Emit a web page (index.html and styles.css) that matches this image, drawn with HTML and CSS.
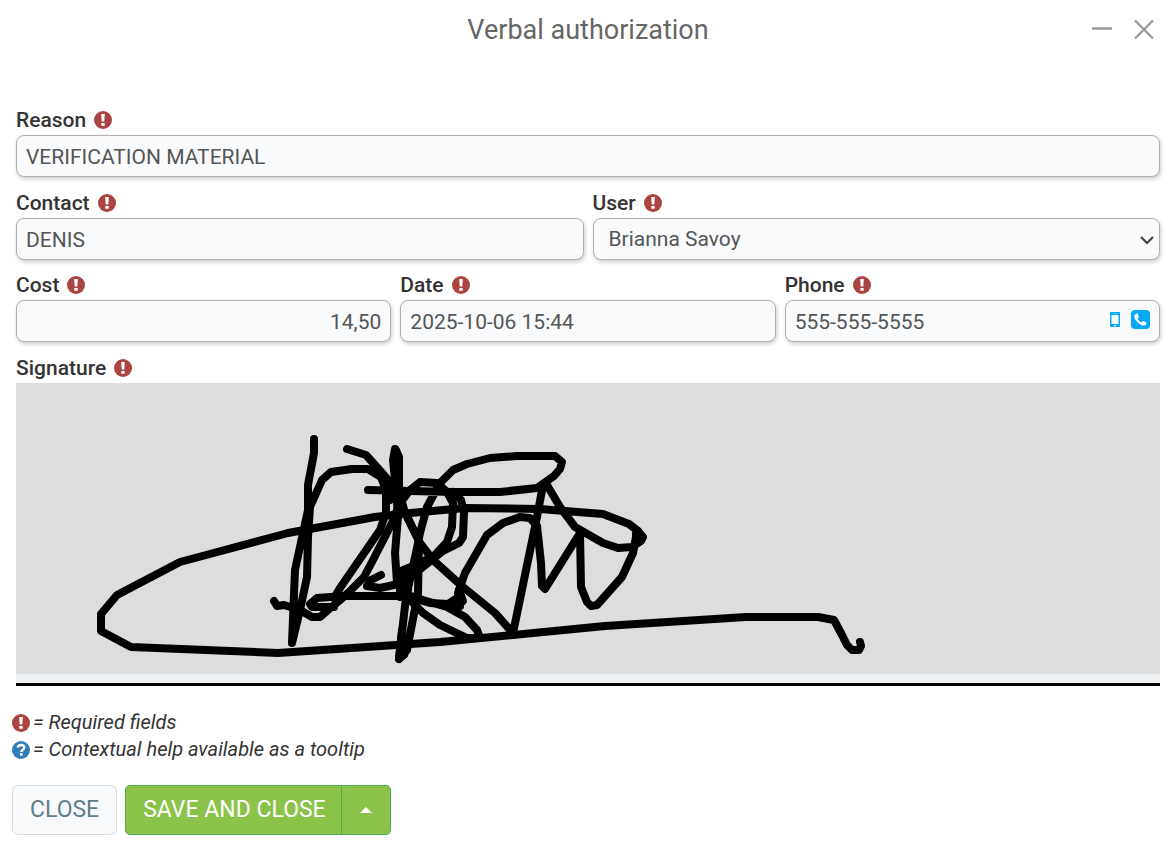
FILE: index.html
```html
<!DOCTYPE html>
<html lang="en">
<head>
<meta charset="utf-8">
<meta name="viewport" content="width=device-width, initial-scale=1">
<title>Verbal authorization</title>
<link rel="stylesheet" href="styles.css">
</head>
<body>
<svg class="defs" aria-hidden="true">
  <symbol id="required" viewBox="0 0 18 18"><circle cx="9" cy="9" r="9" fill="#a94442"/><path d="M7.2 3h3.6l-.5 7.4H7.7zM7.3 12h3.4v2.8H7.3z" fill="#fff"/></symbol>
  <symbol id="help" viewBox="0 0 18 18"><circle cx="9" cy="9" r="9" fill="#337ab7"/><path d="M5.8 6.7C6 4.8 7.2 4 9 4c2 0 3.300 1 3.300 2.600C12.300 8.700 9.300 8.700 9.300 11" fill="none" stroke="#fff" stroke-width="2.400"/><path d="M8 12.200h2.600v2.500H8z" fill="#fff"/></symbol>
</svg>
<main class="dialog">
  <header class="titlebar">
    <h1 class="title">Verbal authorization</h1>
    <div class="window-actions">
      <button class="icon-button" type="button" aria-label="Minimize"><svg width="22" height="22" viewBox="0 0 22 22"><path d="M1 9.500h20" stroke="#999" stroke-width="2.400"/></svg></button>
      <button class="icon-button" type="button" aria-label="Close dialog"><svg width="22" height="22" viewBox="0 0 22 22"><path d="M2 1.500l18 18M20 1.500L2 19.500" stroke="#999" stroke-width="2.300"/></svg></button>
    </div>
  </header>
  <form class="form">
    <div class="row">
      <div class="field">
        <label class="label" for="reason">Reason <svg class="mark"><use href="#required"/></svg></label>
        <input class="control" id="reason" type="text" value="VERIFICATION MATERIAL">
      </div>
    </div>
    <div class="row pair">
      <div class="field">
        <label class="label" for="contact">Contact <svg class="mark"><use href="#required"/></svg></label>
        <input class="control" id="contact" type="text" value="DENIS">
      </div>
      <div class="field">
        <label class="label" for="user">User <svg class="mark"><use href="#required"/></svg></label>
        <div class="control-wrap">
          <select class="control select" id="user"><option>Brianna Savoy</option></select>
          <svg class="chevron" width="14" height="10" viewBox="0 0 14 10"><path d="M1 2L7 8 13 2" fill="none" stroke="#444" stroke-width="2.200"/></svg>
        </div>
      </div>
    </div>
    <div class="row">
      <div class="field">
        <label class="label" for="cost">Cost <svg class="mark"><use href="#required"/></svg></label>
        <input class="control number" id="cost" type="text" value="14,50">
      </div>
      <div class="field">
        <label class="label" for="date">Date <svg class="mark"><use href="#required"/></svg></label>
        <input class="control" id="date" type="text" value="2025-10-06 15:44">
      </div>
      <div class="field">
        <label class="label" for="phone">Phone <svg class="mark"><use href="#required"/></svg></label>
        <div class="control-wrap">
          <input class="control" id="phone" type="tel" value="555-555-5555">
          <div class="phone-actions">
            <button class="icon-button" type="button" aria-label="Text message"><svg width="10" height="16" viewBox="0 0 10 16"><path fill="#03a9f4" fill-rule="evenodd" d="M1 0h8a1 1 0 0 1 1 1v13a1 1 0 0 1-1 1H1a1 1 0 0 1-1-1V1a1 1 0 0 1 1-1zM1.500 3v9h7V3zM3.500 1.200v.6h3v-.6zM4 13v1.200h2V13z"/></svg></button>
            <button class="icon-button" type="button" aria-label="Call"><svg width="19" height="19" viewBox="0 0 19 19"><rect width="19" height="19" rx="4" fill="#03a9f4"/><path fill="#fff" d="M5.500 3.500L4 4.500c-.6.500-.9 1.500-.6 2.600.9 3.600 4 7 8 8.300 1.500.4 2.800.2 3.400-.7l.8-1.500c0-.4-.2-.6-.4-.7l-2.700-1.500c-.4-.2-.7-.1-1 .2l-1 1.200c-1.900-.8-3.200-2.200-4-4l1.100-1c.3-.3.3-.6.200-1L6.500 3.800c-.2-.5-.6-.6-1-.3z"/></svg></button>
          </div>
        </div>
      </div>
    </div>
    <div class="field">
      <span class="label">Signature <svg class="mark"><use href="#required"/></svg></span>
      <div class="signature">
        <svg class="signature-pad" viewBox="16 383 1144 291" role="img" aria-label="Signature">
          <g fill="none" stroke="#000" stroke-width="8" stroke-linecap="round" stroke-linejoin="round">
            <path d="M274 601L277 606 284 605 300 610 312 617 320 617 328 610 339 601 348 593 364 577 373 560 392 523 400 503 410 490 420 482 437 483 447 492 453 503 452 527 447 542 435 555 403 572 398 580"/>
            <path d="M314 439L314 453 308 485V510L303 533 295 570 292 643 300 610 307 577 308 537 310 507 322 480 331 472 352 469 368 469 381 477 386 490V513L380 530 340 588 334 598"/>
            <path d="M334 607L312 607 310 604 317 598 345 596H405L430 603 448 604 460 596"/>
            <path d="M347 449L366 455 383 474 395 488 407 517 420 543 433 560 463 587 495 613 513 633 537 517 543 485"/>
            <path d="M395 449L393 460 396 490 398 517 395 553 397 583 407 597 423 613 440 625 467 638 480 638 477 630 465 617 447 607 423 600 405 594"/>
            <path d="M396 450L399 457V490L404 510 419 541 418 593 407 650 399 659 406 597 416 553 420 533 427 507 440 483 453 470 467 464 490 458 517 456H555L562 462 560 469 554 476 537 488 500 492H453L368 490"/>
            <path d="M453 492L461 500 464 512 463 537 459 543 443 551 403 583 380 588 367 586 371 580 381 575"/>
            <path d="M390 500L397 486M403 570L424 562M400 584L410 575 435 555M400 582V597L408 590M402 630L399 659 404 655"/>
            <path d="M460 606L458 593 465 573 487 535 503 523 520 517 530 518 537 526 541 563 542 586 545 589 580 533 581 587 587 602 591 606 597 605 622 577 633 553 636 537"/>
            <path d="M440 604L456 607 463 601 459 590"/>
            <path d="M547 485L560 507 575 527 603 543 618 548 632 547 641 541 643 537 638 531 629 524 603 514 540 509 465 508 400 514 375 517 288 533 180 562 117 595 101 614V631L131 647 278 653 440 642 605 626 746 617H818L834 620 842 635 847 645 852 650H859L861 646 860 642M636 534L638 542"/>
          </g>
        </svg>
      </div>
    </div>
    <div class="legend">
      <p class="legend-line"><svg class="mark"><use href="#required"/></svg><span>= Required fields</span></p>
      <p class="legend-line"><svg class="mark"><use href="#help"/></svg><span>= Contextual help available as a tooltip</span></p>
    </div>
    <footer class="actions">
      <button class="button" type="button">CLOSE</button>
      <div class="button-group">
        <button class="button primary first" type="button">SAVE AND CLOSE</button>
        <button class="button primary last" type="button" aria-label="More save options"><svg width="12" height="6" viewBox="0 0 12 6"><path d="M6 0l6 6H0z" fill="#fff"/></svg></button>
      </div>
    </footer>
  </form>
</main>
</body>
</html>
```
FILE: styles.css
```css
* { box-sizing: border-box; }
body { margin: 0; background: #fff; color: #333; font: 21px/28px Roboto, "Liberation Sans", sans-serif; }
.defs { position: absolute; width: 0; height: 0; }
.titlebar { display: grid; grid-template-columns: 1fr auto 1fr; align-items: center; height: 60px; padding: 0 18px 0 21px; }
.title { grid-column: 2; margin: 0; font-size: 27px; font-weight: 400; color: #666; }
.window-actions { display: flex; justify-content: flex-end; gap: 20px; }
.icon-button { display: block; padding: 0; border: 0; background: none; cursor: pointer; }
.icon-button svg { display: block; }
.form { padding: 45px 12px 12px; }
.row { display: flex; gap: 9px; margin-bottom: 11px; }
.pair { margin-bottom: 10px; }
.row, .form > .field { padding-left: 4px; padding-right: 1px; }
.field { flex: 1 1 0; min-width: 0; }
.label { display: flex; align-items: center; gap: 8px; height: 30px; font-weight: 500; }
.mark { flex: none; width: 18px; height: 18px; }
.control { display: block; width: 100%; height: 42px; padding: 2px 9px 0; border: 1px solid #b0b0b0; border-radius: 8px; background: #f9fafc; box-shadow: 1px 2px 4px rgba(0, 0, 0, 0.2); color: #555; font: inherit; }
.number { text-align: right; }
.control-wrap { position: relative; }
.select { appearance: none; padding: 0 15px; }
.chevron { position: absolute; right: 6px; top: 17px; pointer-events: none; }
.phone-actions { position: absolute; right: 10px; top: 10px; display: flex; align-items: center; gap: 11px; }
.signature { padding-bottom: 9px; border-bottom: 3px solid #000; background: #eef2f5; }
.signature-pad { display: block; width: 100%; height: auto; background: #dedddb; }
.legend { padding: 23px 0 22px; font-size: 20px; font-style: italic; line-height: 27px; }
.legend-line { display: flex; align-items: center; gap: 3px; margin: 0; }
.actions { display: flex; gap: 8px; }
.button-group { display: flex; }
.button { height: 50px; padding: 0 17px; border: 1px solid #d5dfe3; border-radius: 6px; background: #f7f9fb; color: #607d8b; font: 23px/28px Roboto, "Liberation Sans", sans-serif; cursor: pointer; }
.primary { border-color: #4caf50; background: #8bc34a; color: #fff; }
.first { padding: 0 15px 0 17px; border-radius: 5px 0 0 5px; }
.last { margin-left: -1px; padding: 0 18px; border-radius: 0 5px 5px 0; }
.last svg { display: block; }
```
